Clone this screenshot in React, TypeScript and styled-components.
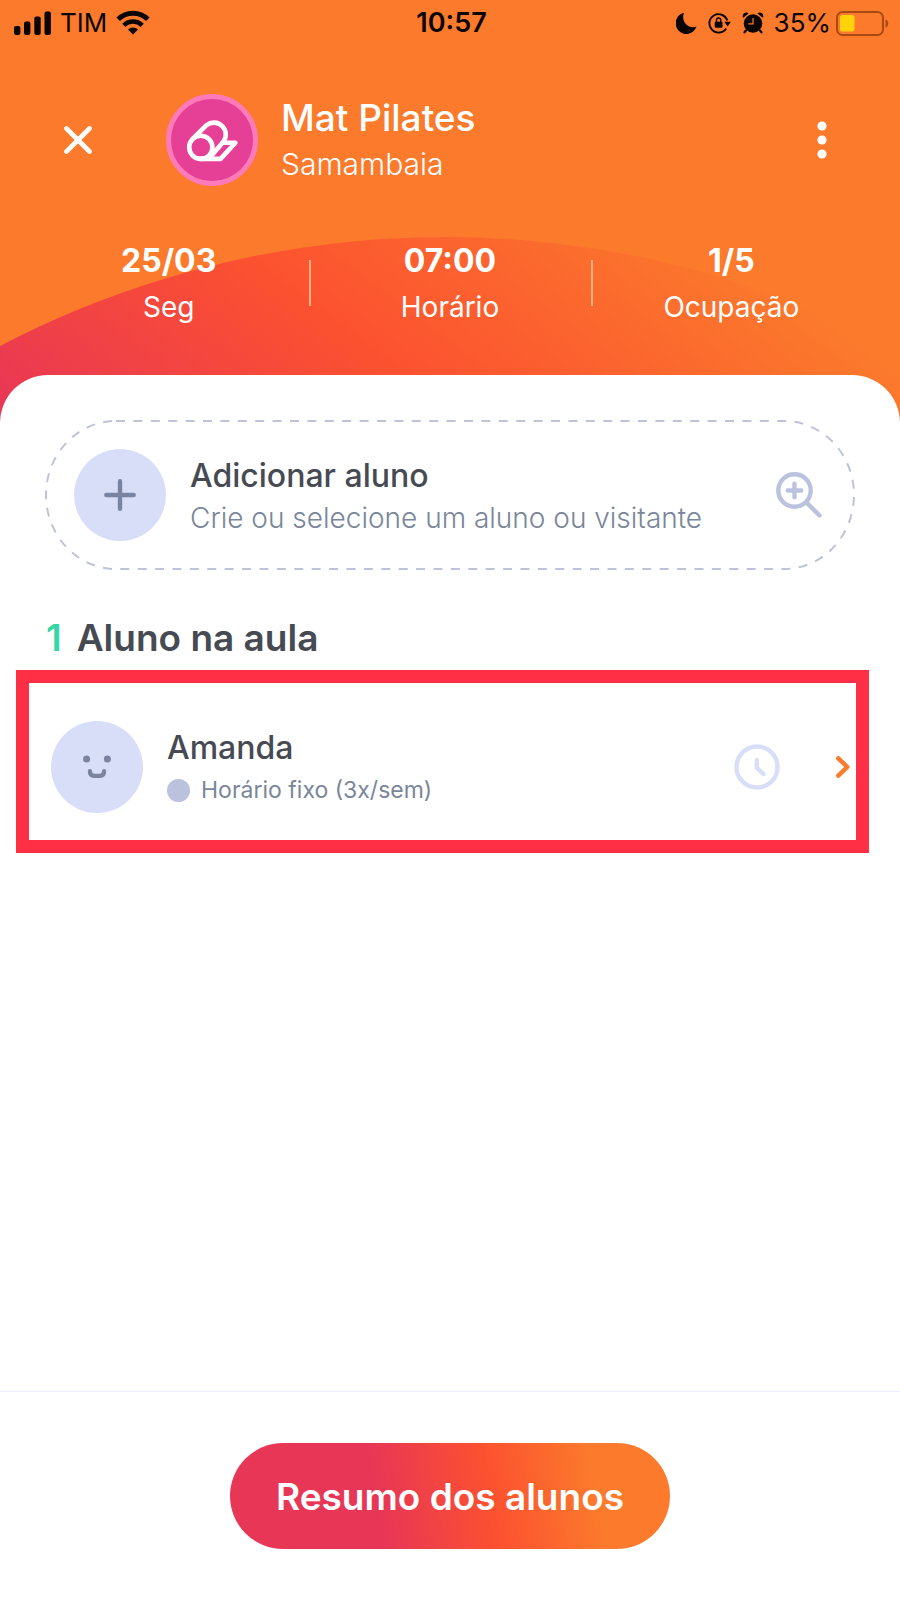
import React from 'react';
import styled, { createGlobalStyle } from 'styled-components';

const color = {
  orange: '#fb7a2c',
  coral: '#fc5130',
  crimson: '#e83656',
  highlight: '#ff2f45',
  ink: '#464a53',
  slate: '#7a869a',
  periwinkle: '#bac2de',
  lavender: '#d9def8',
  green: '#36d6a5',
};

const GlobalStyle = createGlobalStyle`
  *, *::before, *::after { box-sizing: border-box; }
  body {
    margin: 0;
    background: #fff;
    font-family: Inter, "Liberation Sans", sans-serif;
  }
  button {
    font: inherit;
    color: inherit;
    background: none;
    border: 0;
    padding: 0;
    cursor: pointer;
    text-align: left;
  }
  svg { display: block; flex: none; }
  h1, h2, p, dl, dt, dd, ul { margin: 0; padding: 0; list-style: none; font-weight: 400; }
`;

const Screen = styled.div`
  display: flex;
  flex-direction: column;
  min-height: 100vh;
`;

const Header = styled.header`
  position: relative;
  background: ${color.orange};
  color: #fff;
  padding-bottom: 95px;
`;

const Hill = styled.svg`
  position: absolute;
  inset: 0;
  width: 100%;
  height: 100%;
`;

const StatusBar = styled.div`
  position: relative;
  display: grid;
  grid-template-columns: 1fr auto 1fr;
  align-items: center;
  height: 46px;
  padding: 0 11px 0 14px;
  color: #0b0502;
  font-size: 26px;
  line-height: 30px;
`;

const StatusGroup = styled.div<{ $end?: boolean; $gap: number }>`
  display: flex;
  align-items: center;
  justify-content: ${(p) => (p.$end ? 'flex-end' : 'flex-start')};
  gap: ${(p) => p.$gap}px;
`;

const StatusIcons = styled.div`
  display: flex;
  align-items: center;
  gap: 11px;
  margin-right: 5px;
`;

const Clock = styled.time`
  font-size: 27px;
  font-weight: 600;
`;

const TitleRow = styled.div`
  position: relative;
  display: flex;
  align-items: center;
  height: 92px;
  margin: 48px 56px 0;
`;

const IconButton = styled.button`
  display: flex;
  align-items: center;
  justify-content: center;
  width: 44px;
  height: 44px;
`;

const ClassBadge = styled.div`
  display: flex;
  margin: 0 23px 0 66px;
`;

const TitleText = styled.div`
  flex: 1;
  padding-top: 2px;
`;

const Title = styled.h1`
  font-size: 37px;
  font-weight: 500;
  line-height: 46px;
`;

const Place = styled.p`
  font-size: 30px;
  font-weight: 300;
  line-height: 46px;
`;

const Stats = styled.dl`
  position: relative;
  display: grid;
  grid-template-columns: repeat(3, 1fr);
  margin: 52px 28px 0;
`;

const Stat = styled.div`
  position: relative;
  display: flex;
  flex-direction: column-reverse;
  text-align: center;
  line-height: 46px;

  & + &::before {
    content: '';
    position: absolute;
    left: 0;
    top: 22px;
    width: 2px;
    height: 46px;
    background: #ffb27f;
  }
`;

const StatLabel = styled.dt`
  font-size: 28px;
`;

const StatValue = styled.dd`
  font-size: 32px;
  font-weight: 700;
`;

const Sheet = styled.main`
  position: relative;
  flex: 1;
  margin-top: -50px;
  padding-top: 45px;
  background: #fff;
  border-radius: 48px 48px 0 0;
`;

const AddCard = styled.button`
  position: relative;
  display: flex;
  align-items: center;
  width: calc(100% - 90px);
  height: 150px;
  margin: 0 45px;
  padding: 0 33px 0 29px;
`;

const DashedOutline = styled.svg`
  position: absolute;
  inset: 0;
  width: 100%;
  height: 100%;

  rect {
    width: calc(100% - 2px);
    height: calc(100% - 2px);
  }
`;

const Avatar = styled.span`
  display: flex;
  align-items: center;
  justify-content: center;
  flex: none;
  width: 92px;
  height: 92px;
  margin-right: 24px;
  border-radius: 50%;
  background: ${color.lavender};
`;

const RowText = styled.span`
  display: flex;
  flex-direction: column;
  flex: 1;
  padding-top: 3px;
`;

const RowTitle = styled.span`
  color: ${color.ink};
  font-size: 32px;
  font-weight: 500;
  line-height: 43px;
`;

const RowHint = styled.span<{ $small?: boolean }>`
  display: flex;
  align-items: center;
  gap: 11px;
  color: ${color.slate};
  font-size: ${(p) => (p.$small ? 23 : 28)}px;
  font-weight: ${(p) => (p.$small ? 400 : 300)};
  line-height: 43px;
`;

const Dot = styled.i`
  width: 23px;
  height: 23px;
  border-radius: 50%;
  background: ${color.periwinkle};
`;

const SectionTitle = styled.h2`
  margin: 46px 46px 10px;
  color: ${color.ink};
  font-size: 37px;
  font-weight: 600;
  line-height: 44px;
`;

const Count = styled.span`
  margin-right: 15px;
  color: ${color.green};
`;

const StudentItem = styled.li`
  margin: 0 31px 0 16px;
  border: 13px solid ${color.highlight};
`;

const StudentButton = styled.button`
  display: flex;
  align-items: center;
  width: 100%;
  padding: 38px 6px 27px 22px;
`;

const Trailing = styled.span`
  display: flex;
  align-items: center;
  gap: 56px;
`;

const Footer = styled.footer`
  display: flex;
  justify-content: center;
  padding: 51px 24px;
  border-top: 1px solid #eef0fb;
`;

const SummaryButton = styled.button`
  height: 106px;
  padding: 0 46px;
  border-radius: 53px;
  background: linear-gradient(
    80deg,
    ${color.crimson} 34%,
    ${color.coral} 59%,
    ${color.orange} 82%
  );
  color: #fff;
  font-size: 37px;
  font-weight: 600;
`;

const SignalIcon = () => (
  <svg width="37" height="24" viewBox="0 0 37 24" fill="currentColor" aria-hidden="true">
    <rect x="0" y="15" width="6.4" height="9" rx="2" />
    <rect x="10" y="10.500" width="6.400" height="13.500" rx="2" />
    <rect x="20.300" y="5.500" width="6.400" height="18.500" rx="2" />
    <rect x="30.500" y="0.500" width="6.400" height="23.500" rx="2" />
  </svg>
);

const WifiIcon = () => (
  <svg width="34" height="26" viewBox="0 0 34 26" fill="none" stroke="currentColor" aria-hidden="true">
    <path d="M2.200 9.300a21 21 0 0 1 29.600 0" strokeWidth="5" />
    <path d="M7.800 15.300a13.200 13.200 0 0 1 18.400 0" strokeWidth="4.600" />
    <path d="M12 19.500a7.500 7.500 0 0 1 10 0L17 24.500z" fill="currentColor" stroke="none" />
  </svg>
);

const MoonIcon = () => (
  <svg width="21" height="22" viewBox="0 0 21 22" fill="currentColor" aria-hidden="true">
    <path d="M8 .8A10.700 10.700 0 1 0 20.500 14.600C12.500 17.500 4.500 9.500 8 .8z" />
  </svg>
);

const RotationLockIcon = () => (
  <svg width="23" height="22" viewBox="0 0 23 22" aria-hidden="true">
    <path d="M19.300 8.500A9.200 9.200 0 1 0 18.200 16.500" fill="none" stroke="currentColor" strokeWidth="1.900" />
    <path d="M16.300 9.800h6.600l-3.300 4.600z" fill="currentColor" />
    <rect x="6.700" y="9.800" width="7.800" height="6" rx="1" fill="currentColor" />
    <path d="M8.500 10V8.100a2.100 2.100 0 0 1 4.200 0V10" fill="none" stroke="currentColor" strokeWidth="1.500" />
  </svg>
);

const AlarmIcon = () => (
  <svg width="22" height="22" viewBox="0 0 22 22" aria-hidden="true">
    <circle cx="11" cy="11.500" r="9.300" fill="currentColor" />
    <path d="M1.200 5.800A3.500 3.500 0 0 1 6.600 1.500zM20.800 5.800a3.500 3.500 0 0 0-5.400-4.300z" fill="currentColor" />
    <path d="M4 18.500 2.500 20.300M18 18.500l1.500 1.800" stroke="currentColor" strokeWidth="2.200" strokeLinecap="round" />
    <path d="M11 6v5.800H6.300" fill="none" stroke={color.orange} strokeWidth="1.200" />
  </svg>
);

const BatteryIcon = () => (
  <svg width="53" height="25" viewBox="0 0 53 25" aria-hidden="true">
    <rect x="1" y="1" width="46" height="23" rx="5.500" fill="none" stroke="#a84a12" strokeWidth="2" />
    <path d="M49.500 8.500c3.600 1 3.600 7 0 8z" fill="#a84a12" />
    <rect x="4" y="4" width="14.500" height="16.500" rx="2.500" fill="#ffd20a" />
  </svg>
);

const CloseIcon = () => (
  <svg width="28" height="28" viewBox="0 0 28 28" aria-hidden="true">
    <path d="M2.500 2.500l23 23M25.500 2.500l-23 23" stroke="#fff" strokeWidth="4.600" strokeLinecap="round" />
  </svg>
);

const MoreIcon = () => (
  <svg width="10" height="38" viewBox="0 0 10 38" fill="#fff" aria-hidden="true">
    <circle cx="5" cy="5" r="4.600" />
    <circle cx="5" cy="19" r="4.600" />
    <circle cx="5" cy="33" r="4.600" />
  </svg>
);

const MatIcon = () => (
  <svg width="92" height="92" viewBox="0 0 92 92" aria-hidden="true">
    <circle cx="46" cy="46" r="43.500" fill="#e64096" stroke="#ff7ab9" strokeWidth="5" />
    <g fill="none" stroke="#fff" strokeWidth="4.600" strokeLinejoin="round" strokeLinecap="round">
      <circle cx="34.800" cy="53.300" r="11.600" />
      <path d="M26.400 45.200 40.500 31.200A11.900 11.900 0 0 1 57.300 47.800L43.500 64" />
      <path d="M34.800 64.900H54.600L69.400 48.700H56.700" />
    </g>
  </svg>
);

const PlusIcon = () => (
  <svg width="32" height="32" viewBox="0 0 32 32" aria-hidden="true">
    <path d="M16 2.300v27.400M2.300 16h27.400" stroke="#7a83a0" strokeWidth="4.400" strokeLinecap="round" />
  </svg>
);

const SearchAddIcon = () => (
  <svg width="46" height="46" viewBox="0 0 46 46" fill="none" stroke={color.periwinkle} strokeLinecap="round" aria-hidden="true">
    <circle cx="18.500" cy="18.500" r="16.200" strokeWidth="4.400" />
    <path d="M18.500 11.800v13.400M11.800 18.500h13.400M30.500 30.500l13 13" strokeWidth="4.400" />
  </svg>
);

const FaceIcon = () => (
  <svg width="28" height="24" viewBox="0 0 28 24" aria-hidden="true">
    <circle cx="3.600" cy="4" r="3.500" fill="#7a83a0" />
    <circle cx="24.400" cy="4" r="3.500" fill="#7a83a0" />
    <path d="M6.900 16c0 3.500 1.500 4.800 4 4.800h6.200c2.500 0 4-1.300 4-4.800" fill="none" stroke="#7a83a0" strokeWidth="4.200" strokeLinecap="round" />
  </svg>
);

const ClockIcon = () => (
  <svg width="46" height="46" viewBox="0 0 46 46" fill="none" stroke={color.lavender} strokeWidth="4.400" strokeLinecap="round" strokeLinejoin="round" aria-hidden="true">
    <circle cx="23" cy="23" r="20.500" />
    <path d="M22.800 16v7.800l6.700 6.200" />
  </svg>
);

const ChevronIcon = () => (
  <svg width="14" height="22" viewBox="0 0 14 22" aria-hidden="true">
    <path d="M2.300 2.300 11.300 11l-9 8.700" fill="none" stroke={color.orange} strokeWidth="4.400" strokeLinecap="round" strokeLinejoin="round" />
  </svg>
);

const stats = [
  { value: '25/03', label: 'Seg' },
  { value: '07:00', label: 'Horário' },
  { value: '1/5', label: 'Ocupação' },
];

export default function App() {
  return (
    <>
      <GlobalStyle />
      <Screen>
        <Header>
          <Hill viewBox="0 0 900 425" preserveAspectRatio="none" aria-hidden="true">
            <defs>
              <linearGradient id="hill" gradientUnits="userSpaceOnUse" x1="0" y1="415" x2="343" y2="-43">
                <stop offset="0" stopColor={color.crimson} />
                <stop offset="0.475" stopColor={color.coral} />
                <stop offset="1" stopColor={color.orange} />
              </linearGradient>
            </defs>
            <circle cx="445" cy="1200" r="963" fill="url(#hill)" />
          </Hill>

          <StatusBar>
            <StatusGroup $gap={9}>
              <SignalIcon />
              <span>TIM</span>
              <WifiIcon />
            </StatusGroup>
            <Clock>10:57</Clock>
            <StatusGroup $end $gap={5}>
              <StatusIcons>
                <MoonIcon />
                <RotationLockIcon />
                <AlarmIcon />
              </StatusIcons>
              <span>35%</span>
              <BatteryIcon />
            </StatusGroup>
          </StatusBar>

          <TitleRow>
            <IconButton type="button" aria-label="Fechar">
              <CloseIcon />
            </IconButton>
            <ClassBadge>
              <MatIcon />
            </ClassBadge>
            <TitleText>
              <Title>Mat Pilates</Title>
              <Place>Samambaia</Place>
            </TitleText>
            <IconButton type="button" aria-label="Mais opções">
              <MoreIcon />
            </IconButton>
          </TitleRow>

          <Stats>
            {stats.map((s) => (
              <Stat key={s.label}>
                <StatLabel>{s.label}</StatLabel>
                <StatValue>{s.value}</StatValue>
              </Stat>
            ))}
          </Stats>
        </Header>

        <Sheet>
          <AddCard type="button">
            <DashedOutline aria-hidden="true">
              <rect x="1" y="1" rx="70" ry="74" fill="none" stroke="#bfc3da" strokeWidth="2" strokeDasharray="9 8.400" />
            </DashedOutline>
            <Avatar>
              <PlusIcon />
            </Avatar>
            <RowText>
              <RowTitle>Adicionar aluno</RowTitle>
              <RowHint>Crie ou selecione um aluno ou visitante</RowHint>
            </RowText>
            <SearchAddIcon />
          </AddCard>

          <SectionTitle>
            <Count>1</Count>
            Aluno na aula
          </SectionTitle>

          <ul>
            <StudentItem>
              <StudentButton type="button">
                <Avatar>
                  <FaceIcon />
                </Avatar>
                <RowText>
                  <RowTitle>Amanda</RowTitle>
                  <RowHint $small>
                    <Dot />
                    Horário fixo (3x/sem)
                  </RowHint>
                </RowText>
                <Trailing>
                  <ClockIcon />
                  <ChevronIcon />
                </Trailing>
              </StudentButton>
            </StudentItem>
          </ul>
        </Sheet>

        <Footer>
          <SummaryButton type="button">Resumo dos alunos</SummaryButton>
        </Footer>
      </Screen>
    </>
  );
}
